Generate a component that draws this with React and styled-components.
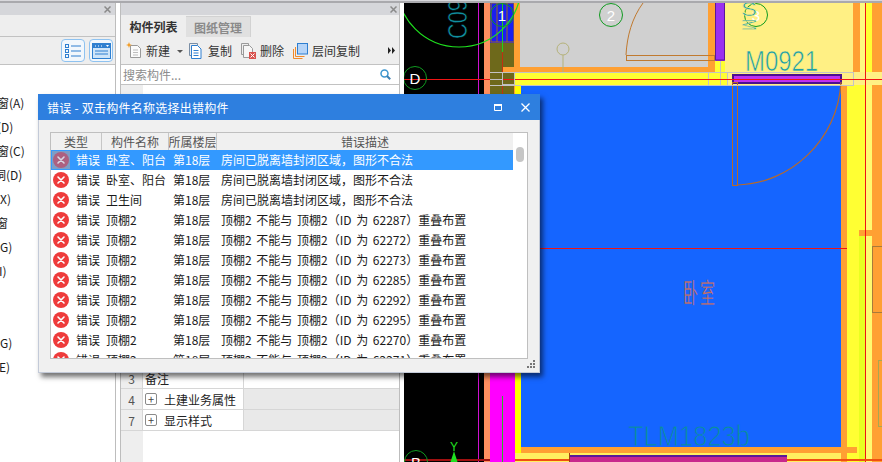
import React from 'react';
import styled, { createGlobalStyle } from 'styled-components';

const FONT = '"Noto Sans CJK SC", "Noto Sans", "Liberation Sans", sans-serif';

const Global = createGlobalStyle`
  html, body { margin: 0; padding: 0; background: #fff; overflow: hidden; }
  body { font: 12px ${FONT}; color: #222; }
  * { box-sizing: border-box; }
`;

const Page = styled.div`
  position: relative;
  width: 882px;
  height: 462px;
  overflow: hidden;
  display: flex;
  flex-direction: column;
`;
const TopStrip = styled.div`
  height: 3px;
  flex: none;
  background: linear-gradient(#d8d8dc 0 1px, #a9a9ad 1px 3px);
`;
const Workspace = styled.div`
  flex: 1;
  min-height: 0;
  display: grid;
  grid-template-columns: 116px 4px 280px 4px 478px;
`;
const Panel = styled.section`
  display: flex;
  flex-direction: column;
  min-width: 0;
  height: 100%;
  background: #fff;
  border-right: 1px solid #bdbdbd;
  border-left: ${p => (p.$left ? '1px solid #bdbdbd' : '0')};
`;
const Gap = styled.div`background: #fff;`;
const PanelHead = styled.header`
  height: 12px;
  flex: none;
  background: #d5d6da;
  display: flex;
  justify-content: flex-end;
  align-items: center;
  padding-right: ${p => p.$pad || 3}px;
`;
const HeadClose = styled.svg`width: 7px; height: 7px; display: block;`;
const BlankBand = styled.div`
  height: 22px;
  flex: none;
  background: #eeeeee;
  border-bottom: 1px solid #c2c2c2;
`;
const ViewBar = styled.div`
  height: 28px;
  flex: none;
  background: #eeeeee;
  border-bottom: 1px solid #c2c2c2;
  display: flex;
  justify-content: flex-end;
  align-items: center;
  gap: 4px;
  padding: 2px 2px 2px 0;
`;
const ViewButton = styled.button`
  width: 24px;
  height: 23px;
  padding: 0;
  border: 1px solid #8ec2f0;
  border-radius: 4px;
  background: #f2f7fc;
  display: flex;
  align-items: center;
  justify-content: center;
`;
const ClipList = styled.ul`
  list-style: none;
  margin: 0;
  padding: 0;
  flex: 1;
  overflow: hidden;
`;
const ClipItem = styled.li`
  height: 24px;
  line-height: 24px;
  white-space: nowrap;
  font-size: 12px;
  color: #1c1c1c;
  margin-left: ${p => p.$shift}px;
  &:first-child { margin-top: 26px; }
`;

const Tabs = styled.div`
  height: 22px;
  flex: none;
  display: flex;
  background: #eeeeee;
  padding-top: 1px;
`;
const Tab = styled.div`
  width: 65px;
  display: flex;
  align-items: center;
  justify-content: center;
  font-weight: 700;
  font-size: 12px;
  color: ${p => (p.$active ? '#333' : '#8a8a8a')};
  background: ${p => (p.$active ? '#eeeeee' : '#e0e0e0')};
  border-top: ${p => (p.$active ? '0' : '1px solid #d2d2d2')};
  border-right: ${p => (p.$active ? '0' : '1px solid #d2d2d2')};
`;
const Toolbar = styled.div`
  height: 28px;
  flex: none;
  display: flex;
  align-items: center;
  background: #eeeeee;
  border-bottom: 1px solid #c2c2c2;
  padding-left: 5px;
  position: relative;
`;
const Tool = styled.div`
  display: flex;
  align-items: center;
  gap: ${p => p.$gap || 4}px;
  margin-right: ${p => p.$mr || 0}px;
  color: #333;
  font-size: 12px;
  white-space: nowrap;
`;
const Caret = styled.span`
  width: 0;
  height: 0;
  margin: 1px 0 0 4px;
  border-left: 3px solid transparent;
  border-right: 3px solid transparent;
  border-top: 3px solid #555;
`;
const More = styled.div`
  margin-left: auto;
  margin-right: 4px;
  display: flex;
`;
const SearchBar = styled.div`
  height: 20px;
  flex: none;
  display: flex;
  align-items: center;
  justify-content: space-between;
  padding: 0 8px 0 2px;
  border-bottom: 1px solid #c2c2c2;
  color: #8c8c8c;
  font-size: 12px;
`;
const PropArea = styled.div`
  flex: 1;
  min-height: 0;
  display: flex;
  flex-direction: column;
  justify-content: flex-start;
  padding-top: 283px;
  background: linear-gradient(90deg, #eeeeee 22px, #ffffff 22px);
`;
const PropRow = styled.div`
  height: 21px;
  flex: none;
  display: grid;
  grid-template-columns: 22px 101px 1fr;
  border-bottom: 1px solid #d6d6d6;
  font-size: 12px;
`;
const PropNum = styled.div`
  display: flex;
  align-items: center;
  justify-content: center;
  color: #555;
  border-right: 1px solid #d6d6d6;
`;
const PropName = styled.div`
  display: flex;
  align-items: center;
  gap: 7px;
  padding-left: 2px;
  color: #222;
  background: #fff;
  border-right: 1px solid #d6d6d6;
`;
const PropValue = styled.div`background: ${p => (p.$group ? '#e9e9e9' : '#fff')};`;
const Expand = styled.span`
  width: 12px;
  height: 12px;
  border: 1px solid #8a8a8a;
  border-radius: 2px;
  background: #fff;
  display: flex;
  align-items: center;
  justify-content: center;
  font-size: 11px;
  line-height: 1;
  color: #444;
`;

const Canvas = styled.svg`
  display: block;
  width: 478px;
  height: 459px;
  background: #000;
`;

const Dialog = styled.div`
  position: absolute;
  left: 38px;
  top: 94px;
  width: 502px;
  height: 279px;
  background: #f0f0f0;
  border: 1px solid #c3cad8;
  border-top: 0;
  box-shadow: 3px 4px 5px rgba(0, 0, 0, 0.55);
  display: flex;
  flex-direction: column;
`;
const TitleBar = styled.div`
  height: 26px;
  flex: none;
  margin: 0 -1px;
  background: #2e7fdf;
  color: #fff;
  font-size: 12px;
  display: flex;
  align-items: center;
  padding: 0 10px 0 9px;
`;
const TitleText = styled.div`flex: 1; letter-spacing: 0.02em;`;
const WinGlyph = styled.svg`display: block; margin-left: ${p => p.$ml || 0}px;`;
const TableFrame = styled.div`
  margin: 12px 11px 0 11px;
  height: 227px;
  border: 1px solid #bfbfbf;
  background: #fff;
  display: grid;
  grid-template-columns: 462px 14px;
  overflow: hidden;
  position: relative;
`;
const TableMain = styled.div`min-width: 0; overflow: hidden;`;
const HeadRow = styled.div`
  height: 17px;
  display: grid;
  grid-template-columns: 51px 67px 48px 1fr;
  background: #f0f0f0;
  color: #555;
  font-size: 12px;
`;
const HeadCell = styled.div`
  display: flex;
  align-items: center;
  justify-content: center;
  white-space: nowrap;
  border-right: ${p => (p.$last ? '0' : '1px solid #c6c6c6')};
  overflow: hidden;
`;
const Row = styled.div`
  height: 20px;
  display: grid;
  grid-template-columns: 25px 30px 67px 48px 1fr;
  grid-template-rows: 20px;
  background: ${p => (p.$selected ? '#3399ff' : '#fff')};
  color: ${p => (p.$selected ? '#fff' : '#1a1a1a')};
  font-size: 12px;
  line-height: 19px;
  white-space: nowrap;
`;
const DescCell = styled.div`word-spacing: ${p => (p.$wide ? 2 : 0)}px;`;
const IconCell = styled.div`
  height: 20px;
  padding-left: 1px;
  display: flex;
  align-items: center;
  justify-content: flex-start;
`;
const IconBack = styled.div`
  width: 18px;
  height: 18px;
  display: flex;
  align-items: center;
  justify-content: center;
  background: ${p => (p.$selected ? '#7d9ec6' : 'transparent')};
`;
const ScrollTrack = styled.div`
  background: #fff;
  padding: 14px 3px 0 3px;
`;
const ScrollThumb = styled.div`
  width: 8px;
  height: 15px;
  background: #c6c6c6;
  border-radius: 4px;
`;
const Grip = styled.svg`
  position: absolute;
  right: 3px;
  bottom: 3px;
  display: block;
`;

const CloseIcon = ({ c = '#8a8a8a' }) => (
  <HeadClose viewBox="0 0 7 7"><path d="M.5.5l6 6M6.5.5l-6 6" stroke={c} strokeWidth="1.5" /></HeadClose>
);

const ListIcon = () => (
  <svg width="16" height="14" viewBox="0 0 16 14" fill="none">
    <g stroke="#2f7fd0">
      <rect x="0.5" y="0.5" width="3" height="3" /><rect x="0.5" y="5.5" width="3" height="3" /><rect x="0.5" y="10.5" width="3" height="3" />
      <path d="M6 2h10M6 7h10M6 12h10" />
    </g>
  </svg>
);
const WindowIcon = () => (
  <svg width="19" height="16" viewBox="0 0 19 16" fill="none">
    <rect x="0.5" y="0.5" width="18" height="15" fill="#cfe4f8" stroke="#2f7fd0" />
    <rect x="1" y="1" width="17" height="4" fill="#2f7fd0" />
    <path d="M3 3h1M6 3h1M9 3h1" stroke="#fff" />
    <path d="M14 2h3l-1.5 2z" fill="#fff" />
    <path d="M3 8h13M3 11h13" stroke="#2f7fd0" />
  </svg>
);
const NewIcon = () => (
  <svg width="17" height="17" viewBox="0 0 17 17" fill="none">
    <path d="M4.5 3.5h7l3 3v9h-10z" fill="#fbfbfb" stroke="#9a9a9a" />
    <path d="M7 8h5M7 10.500h5M7 13h5" stroke="#bdbdbd" />
    <path d="M3 0l.8 2.200L6 3l-2.200.8L3 6l-.8-2.200L0 3l2.200-.8z" fill="#f39a1f" />
  </svg>
);
const CopyIcon = () => (
  <svg width="13" height="16" viewBox="0 0 13 16" fill="none">
    <path d="M.5.5h8v2" stroke="#7a8ea5" />
    <path d="M.5.5v12h2" stroke="#7a8ea5" />
    <path d="M2.500 2.500h6l3.500 3.500v9.500h-9.500z" fill="#fff" stroke="#2f7fd0" />
    <path d="M4.500 7.500h5M4.500 10h5M4.500 12.500h5" stroke="#2f7fd0" />
  </svg>
);
const DeleteIcon = () => (
  <svg width="15" height="16" viewBox="0 0 15 16" fill="none">
    <path d="M.5.5h7v2M.5.500v11h2" stroke="#9a9a9a" />
    <path d="M2.500 2.500h6l3 3v9h-9z" fill="#f6f6f6" stroke="#9a9a9a" />
    <rect x="8" y="9" width="7" height="7" fill="#d9534f" />
    <path d="M9.500 10.500l4 4M13.500 10.500l-4 4" stroke="#fff" />
  </svg>
);
const LayerIcon = () => (
  <svg width="15" height="16" viewBox="0 0 15 16" fill="none">
    <path d="M.5 6v9.500h9" stroke="#ef8a2c" />
    <path d="M2.500 4v9.500h9" stroke="#ef8a2c" />
    <rect x="4.500" y="0.500" width="10" height="10.500" fill="#b6d4f7" stroke="#2f7fd0" />
  </svg>
);
const SearchIcon = () => (
  <svg width="11" height="11" viewBox="0 0 11 11" fill="none">
    <circle cx="4.500" cy="4.500" r="3.500" stroke="#3c96cf" strokeWidth="1.500" />
    <path d="M7 7l3.200 3.200" stroke="#3c7fb0" strokeWidth="2" />
  </svg>
);
const DoubleArrow = () => (
  <svg width="7" height="7" viewBox="0 0 7 7"><path d="M0 0l3 3.500L0 7zM4 0l3 3.500L4 7z" fill="#222" /></svg>
);
const ErrorIcon = ({ selected }) => (
  <IconBack $selected={selected}>
    <svg width="16" height="16" viewBox="0 0 16 16">
      <circle cx="8" cy="8" r="8" fill={selected ? '#ad6080' : '#ee3b3b'} />
      <path d="M5 5l6 6M11 5l-6 6" stroke={selected ? '#d8d8e4' : '#fff'} strokeWidth="1.600" strokeLinecap="round" />
    </svg>
  </IconBack>
);

const Bubble = ({ x, y, r = 11.500, t }) => (
  <g>
    <circle cx={x} cy={y} r={r} fill="none" stroke="#109a20" strokeWidth="1" />
    <text x={x} y={y + 5.500} textAnchor="middle" fill="#fff" fontSize="15" fontFamily="Liberation Sans, sans-serif">{t}</text>
  </g>
);

const Plan = () => (
  <Canvas viewBox="404 3 478 459">
    {/* left service strip */}
    <rect x="404" y="3" width="80" height="459" fill="#000" />
    <rect x="484" y="3" width="6" height="459" fill="#ff8f5f" />
    <rect x="490" y="3" width="25" height="40" fill="#1a1ff0" />
    <rect x="490" y="43" width="25" height="60" fill="#6e691b" />
    <rect x="490" y="372" width="25" height="90" fill="#ff00ff" />
    <rect x="491" y="3" width="23" height="39" fill="none" stroke="#a06a20" />
    <path d="M497 3v39M507 3v39" stroke="#a06a20" />
    <rect x="514" y="3" width="6" height="100" fill="#ffa033" />
    <rect x="478" y="3" width="1" height="459" fill="#d010d0" />
    <path d="M502.500 3v49" stroke="#1fd01f" strokeWidth="1" />
    <path d="M502.500 52v45" stroke="#c03010" strokeWidth="1" />
    <path d="M502.500 396v66" stroke="#28b828" strokeWidth="1" />
    <rect x="503" y="67" width="11" height="6" fill="#ffa033" />
    {/* grey room */}
    <rect x="520" y="3" width="188" height="64" fill="#d0d0d0" />
    <rect x="515" y="67" width="199" height="5" fill="#ffa033" />
    <rect x="708" y="3" width="7" height="69" fill="#ffa033" />
    <rect x="515" y="72" width="212" height="13" fill="#ffff33" />
    <rect x="715" y="60" width="13" height="12" fill="#ffff33" />
    <path d="M643 3C632 18 627 36 626 55" fill="none" stroke="#c07a30" />
    <rect x="626.500" y="55.500" width="88" height="5" fill="none" stroke="#c07a30" />
    <path d="M563 55v17" stroke="#b5b27a" />
    <circle cx="563" cy="49" r="6" fill="none" stroke="#b5b27a" />
    {/* yellow room */}
    <rect x="725" y="3" width="128" height="69" fill="#fff084" />
    <rect x="853" y="3" width="7" height="82" fill="#ffa033" />
    <rect x="860" y="3" width="6" height="82" fill="#fffa80" />
    <rect x="866" y="3" width="6" height="82" fill="#ffff33" />
    <rect x="872" y="3" width="10" height="82" fill="#ffa033" />
    <rect x="715" y="3" width="10" height="58" fill="#9a30f0" />
    <path d="M715.500 3v57h9V3" fill="none" stroke="#5a189a" />
    <rect x="727" y="72" width="155" height="13" fill="#fff084" />
    {/* blue room */}
    <rect x="515" y="85" width="6" height="287" fill="#ffff00" />
    <rect x="521" y="85" width="320" height="362" fill="#1565ff" />
    <rect x="841" y="85" width="6" height="377" fill="#ffa033" />
    <rect x="847" y="85" width="18" height="377" fill="#ffff33" />
    <rect x="859" y="230" width="6" height="232" fill="#e8ff20" />
    <rect x="866" y="85" width="6" height="377" fill="#fffa70" />
    <rect x="872" y="85" width="10" height="377" fill="#ffa033" />
    <rect x="859" y="230" width="13" height="6" fill="#ffa033" />
    <rect x="872.500" y="246.500" width="12" height="66" fill="none" stroke="#a87a3a" />
    <rect x="878.500" y="360.500" width="6" height="66" fill="none" stroke="#a8a850" />
    <rect x="515" y="372" width="6" height="81" fill="#ffff00" />
    <rect x="521" y="447" width="336" height="6" fill="#ffa033" />
    <rect x="515" y="453" width="326" height="9" fill="#fff060" />
    <rect x="569" y="455" width="218" height="7" fill="#c8288c" />
    <rect x="569" y="455" width="218" height="2" fill="#5a189a" />
    <rect x="569" y="453" width="1" height="9" fill="#a04010" />
    {/* door */}
    <rect x="732" y="74" width="110" height="10" fill="#4a1090" />
    <rect x="734" y="76" width="106" height="6" fill="#c030f0" />
    <rect x="732.500" y="82.500" width="5" height="103" fill="none" stroke="#b96a28" />
    <path d="M737 185C790 184 838 140 841 82" fill="none" stroke="#b96a28" strokeWidth="1.200" />
    {/* grid lines */}
    <path d="M490 72.500h363M490 85.500h363M853.500 72v14M708.500 72v13M720.500 61v24M727.500 72v13" stroke="#c4c4c4" fill="none" />
    <path d="M404 79.500h478" stroke="#f01414" strokeWidth="1" />
    <path d="M404 248.500h443" stroke="#f01414" strokeWidth="1" />
    <path d="M865.500 3v459" stroke="#f01414" strokeWidth="1" />
    <path d="M404 460h86" stroke="#a01010" strokeWidth="2" />
    <path d="M515 460h54M787 460h95" stroke="#f05010" strokeWidth="2" />
    <rect x="502.500" y="72.500" width="12" height="12" fill="none" stroke="#c0c0c0" />
    <path d="M490 79.500h13" stroke="#c0c0c0" />
    {/* arcs & bubbles */}
    <circle cx="459" cy="-15" r="62" fill="none" stroke="#1fe01f" strokeWidth="1.200" />
    <Bubble x={502} y={15} t="1" />
    <Bubble x={611} y={15} t="2" />
    <Bubble x={756} y={15} t="3" />
    <Bubble x={415} y={78} t="D" />
    <Bubble x={416} y={462} t="B" />
    {/* drawing annotations */}
    <g fontFamily="Liberation Sans, sans-serif" paintOrder="fill" strokeWidth="0.600">
      <text transform="translate(467 39) rotate(-90)" fontSize="27" fill="#1090a0" stroke="#000" textLength="40" lengthAdjust="spacingAndGlyphs">C09</text>
      <text x="745" y="71" fontSize="30" fill="#1ea0a8" stroke="#fff084" textLength="73" lengthAdjust="spacingAndGlyphs">M0921</text>
      <text x="741" y="16" fontSize="20" fill="#1ea0a8" stroke="#fff084" textLength="16" lengthAdjust="spacingAndGlyphs">S</text>
      <text transform="translate(742 19) rotate(90) scale(.7 1)" fontSize="20" fill="#1ea0a8" stroke="#fff084">M</text>
      <text x="628" y="446" fontSize="30" fill="#0a8f96" stroke="#1565ff" strokeWidth="0.900" textLength="122" lengthAdjust="spacingAndGlyphs">TLM1823b</text>
    </g>
    <text transform="translate(683 303) scale(1 1.800)" fontSize="15" fill="#c8705a" fontFamily={FONT} stroke="#1565ff" strokeWidth="0.200" textLength="32">卧室</text>
    <text x="454" y="451" textAnchor="middle" fontSize="12" fill="#20e020" fontFamily="Liberation Sans, sans-serif">Y</text>
    <path d="M454 451l3.500 11h-7z" fill="#20e020" />
  </Canvas>
);

const leftItems = [
  ['飘窗(A)', -15], ['门(D)', -15], ['飘窗(C)', -15], ['门洞(D)', -18], ['窗(X)', -16], ['飘窗', -16], ['门窗(G)', -28], ['窗(I)', -17],
  ['', 0], ['', 0], ['门窗(G)', -28], ['窗(E)', -17],
];

const desc1 = '房间已脱离墙封闭区域，图形不合法';
const overlap = id => `顶棚2 不能与 顶棚2（ID 为 ${id}）重叠布置`;
const rows = [
  ['卧室、阳台', desc1, false],
  ['卧室、阳台', desc1, false],
  ['卫生间', desc1, false],
  ...[62287, 62272, 62273, 62285, 62292, 62295, 62270, 62271].map(id => ['顶棚2', overlap(id), true]),
];

export default function App() {
  return (
    <Page>
      <Global />
      <TopStrip />
      <Workspace>
        <Panel>
          <PanelHead $pad={4}><CloseIcon /></PanelHead>
          <BlankBand />
          <ViewBar>
            <ViewButton><ListIcon /></ViewButton>
            <ViewButton><WindowIcon /></ViewButton>
          </ViewBar>
          <ClipList>
            {leftItems.map(([t, s], i) => <ClipItem key={i} $shift={s}>{t || '\u00a0'}</ClipItem>)}
          </ClipList>
        </Panel>
        <Gap />
        <Panel $left>
          <PanelHead $pad={2}><CloseIcon /></PanelHead>
          <Tabs>
            <Tab $active>构件列表</Tab>
            <Tab>图纸管理</Tab>
          </Tabs>
          <Toolbar>
            <Tool $gap={3} $mr={6}><NewIcon />新建<Caret /></Tool>
            <Tool $gap={6} $mr={9}><CopyIcon />复制</Tool>
            <Tool $gap={4} $mr={9}><DeleteIcon />删除</Tool>
            <Tool $gap={4}><LayerIcon />层间复制</Tool>
            <More><DoubleArrow /></More>
          </Toolbar>
          <SearchBar>搜索构件...<SearchIcon /></SearchBar>
          <PropArea>
            <PropRow><PropNum>3</PropNum><PropName>备注</PropName><PropValue /></PropRow>
            <PropRow><PropNum>4</PropNum><PropName><Expand>+</Expand>土建业务属性</PropName><PropValue $group /></PropRow>
            <PropRow><PropNum>7</PropNum><PropName><Expand>+</Expand>显示样式</PropName><PropValue $group /></PropRow>
          </PropArea>
        </Panel>
        <Gap />
        <Plan />
      </Workspace>
      <Dialog>
        <TitleBar>
          <TitleText>错误 - 双击构件名称选择出错构件</TitleText>
          <WinGlyph width="8" height="7" viewBox="0 0 8 7"><path d="M.5 1.500h7v5h-7z" fill="none" stroke="#fff" /><path d="M0 1h8" stroke="#fff" strokeWidth="2" /></WinGlyph>
          <WinGlyph $ml={19} width="9" height="9" viewBox="0 0 9 9"><path d="M.5.5l8 8M8.500.5l-8 8" stroke="#fff" strokeWidth="1.300" /></WinGlyph>
        </TitleBar>
        <TableFrame>
          <TableMain>
            <HeadRow>
              <HeadCell>类型</HeadCell>
              <HeadCell>构件名称</HeadCell>
              <HeadCell>所属楼层</HeadCell>
              <HeadCell $last>错误描述</HeadCell>
            </HeadRow>
            {rows.map(([name, d, wide], i) => (
              <Row key={i} $selected={i === 0}>
                <IconCell><ErrorIcon selected={i === 0} /></IconCell>
                <div>错误</div>
                <div>{name}</div>
                <div>第18层</div>
                <DescCell $wide={wide}>{d}</DescCell>
              </Row>
            ))}
          </TableMain>
          <ScrollTrack><ScrollThumb /></ScrollTrack>
        </TableFrame>
        <Grip width="9" height="9" viewBox="0 0 9 9" fill="#777">
          <rect x="6" y="0" width="2" height="2" /><rect x="3" y="3" width="2" height="2" /><rect x="6" y="3" width="2" height="2" />
          <rect x="0" y="6" width="2" height="2" /><rect x="3" y="6" width="2" height="2" /><rect x="6" y="6" width="2" height="2" />
        </Grip>
      </Dialog>
    </Page>
  );
}
